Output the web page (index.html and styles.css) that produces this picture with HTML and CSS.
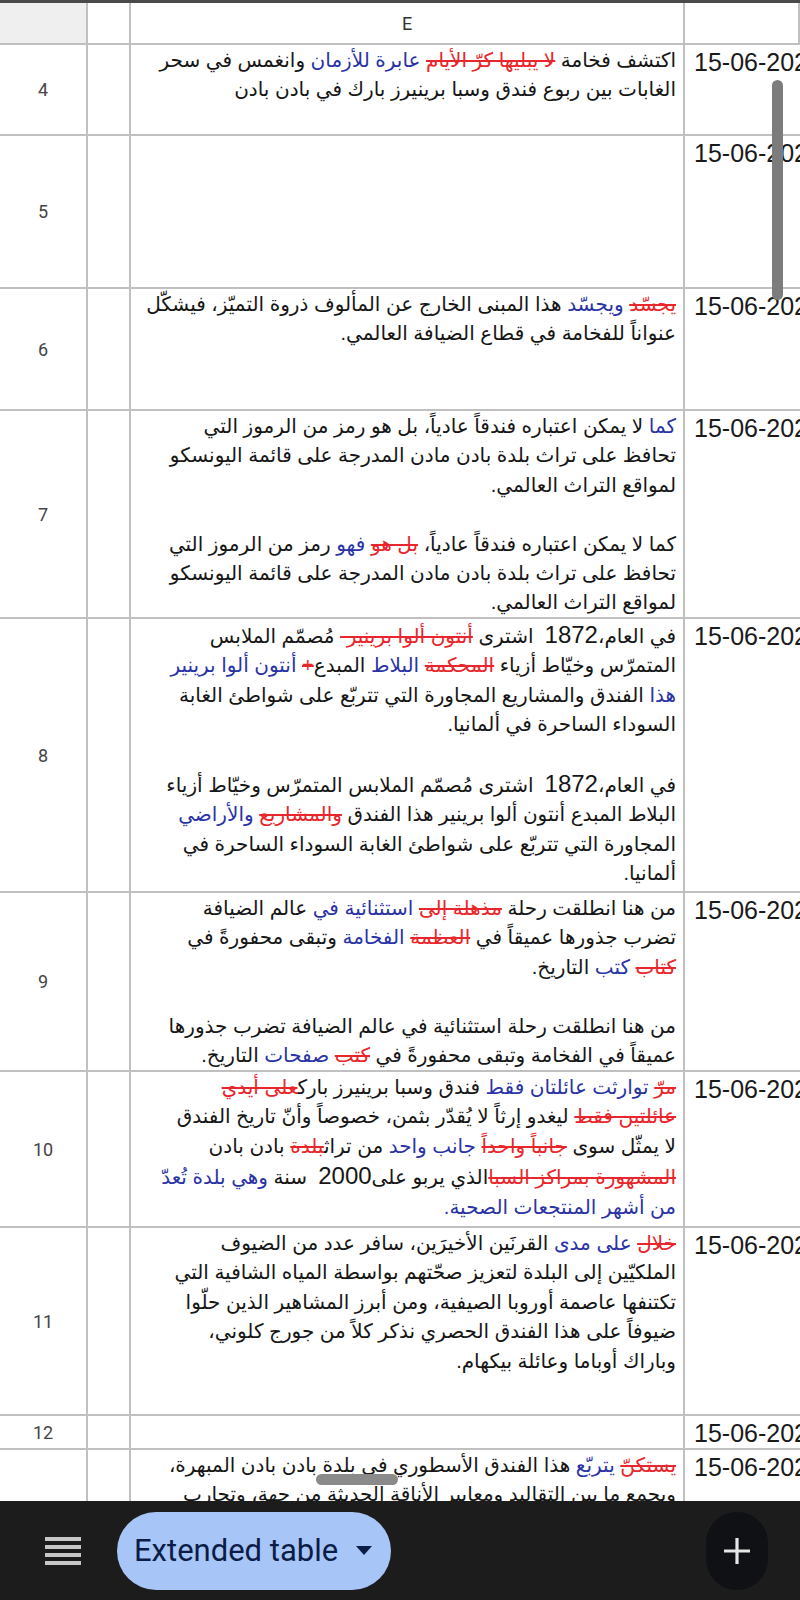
FILE: index.html
```html
<!DOCTYPE html>
<html lang="ar">
<head>
<meta charset="utf-8">
<title>Extended table</title>
<link rel="stylesheet" href="styles.css">
</head>
<body>
<div class="page">
  <div class="sheet">
    <div class="topline"></div>
    <div class="grid">
      <div class="cell corner"></div>
      <div class="cell hdr"></div>
      <div class="cell hdr colname">E</div>
      <div class="cell hdr"></div>

      <div class="cell num">4</div>
      <div class="cell narrow"></div>
      <div class="cell txt"><span class="ln">اكتشف فخامة <del>لا يبليها كرّ الأيام</del> <ins>عابرة للأزمان</ins> وانغمس في سحر</span><br><span class="ln">الغابات بين ربوع فندق وسبا برينيرز بارك في بادن بادن</span></div>
      <div class="cell date">15-06-2025</div>

      <div class="cell num">5</div>
      <div class="cell narrow"></div>
      <div class="cell txt"></div>
      <div class="cell date">15-06-2025</div>

      <div class="cell num">6</div>
      <div class="cell narrow"></div>
      <div class="cell txt"><span class="ln"><del>يجسّد</del> <ins>ويجسّد</ins> هذا المبنى الخارج عن المألوف ذروة التميّز، فيشكّل</span><br><span class="ln">عنواناً للفخامة في قطاع الضيافة العالمي.</span></div>
      <div class="cell date">15-06-2025</div>

      <div class="cell num">7</div>
      <div class="cell narrow"></div>
      <div class="cell txt"><span class="ln"><ins>كما</ins> لا يمكن اعتباره فندقاً عادياً، بل هو رمز من الرموز التي</span><br><span class="ln">تحافظ على تراث بلدة بادن مادن المدرجة على قائمة اليونسكو</span><br><span class="ln">لمواقع التراث العالمي.</span><br><br><span class="ln">كما لا يمكن اعتباره فندقاً عادياً، <del>بل هو</del> <ins>فهو</ins> رمز من الرموز التي</span><br><span class="ln">تحافظ على تراث بلدة بادن مادن المدرجة على قائمة اليونسكو</span><br><span class="ln">لمواقع التراث العالمي.</span></div>
      <div class="cell date">15-06-2025</div>

      <div class="cell num">8</div>
      <div class="cell narrow"></div>
      <div class="cell txt"><span class="ln">في العام،<span class="lat">1872</span>&nbsp; اشترى <del>أنتون ألوا برينير-</del> مُصمّم الملابس</span><br><span class="ln">المتمرّس وخيّاط أزياء <del>المحكمة</del> <ins>البلاط</ins> المبدع<del>+</del> <ins>أنتون ألوا برينير</ins></span><br><span class="ln"><ins>هذا</ins> الفندق والمشاريع المجاورة التي تتربّع على شواطئ الغابة</span><br><span class="ln">السوداء الساحرة في ألمانيا.</span><br><br><span class="ln">في العام،<span class="lat">1872</span>&nbsp; اشترى مُصمّم الملابس المتمرّس وخيّاط أزياء</span><br><span class="ln">البلاط المبدع أنتون ألوا برينير هذا الفندق <del>والمشاريع</del> <ins>والأراضي</ins></span><br><span class="ln">المجاورة التي تتربّع على شواطئ الغابة السوداء الساحرة في</span><br><span class="ln">ألمانيا.</span></div>
      <div class="cell date">15-06-2025</div>

      <div class="cell num">9</div>
      <div class="cell narrow"></div>
      <div class="cell txt"><span class="ln">من هنا انطلقت رحلة <del>مذهلة إلى</del> <ins>استثنائية في</ins> عالم الضيافة</span><br><span class="ln">تضرب جذورها عميقاً في <del>العظمة</del> <ins>الفخامة</ins> وتبقى محفورةً في</span><br><span class="ln"><del>كتاب</del> <ins>كتب</ins> التاريخ.</span><br><br><span class="ln">من هنا انطلقت رحلة استثنائية في عالم الضيافة تضرب جذورها</span><br><span class="ln">عميقاً في الفخامة وتبقى محفورةً في <del>كتب</del> <ins>صفحات</ins> التاريخ.</span></div>
      <div class="cell date">15-06-2025</div>

      <div class="cell num">10</div>
      <div class="cell narrow"></div>
      <div class="cell txt"><span class="ln"><del>مرّ</del> <ins>توارثت عائلتان فقط</ins> فندق وسبا برينيرز بارك<del>على أيدي</del></span><br><span class="ln"><del>عائلتين فقط</del> ليغدو إرثاً لا يُقدّر بثمن، خصوصاً وأنّ تاريخ الفندق</span><br><span class="ln">لا يمثّل سوى <del>جانباً واحداً</del> <ins>جانب واحد</ins> من تراث<del>بلدة</del> بادن بادن</span><br><span class="ln"><del>المشهورة بمراكز السبا</del>الذي يربو على<span class="lat">2000</span>&nbsp; سنة <ins>وهي بلدة تُعدّ</ins></span><br><span class="ln"><ins>من أشهر المنتجعات الصحية.</ins></span></div>
      <div class="cell date">15-06-2025</div>

      <div class="cell num">11</div>
      <div class="cell narrow"></div>
      <div class="cell txt"><span class="ln"><del>خلال</del> <ins>على مدى</ins> القرنَين الأخيرَين، سافر عدد من الضيوف</span><br><span class="ln">الملكيّين إلى البلدة لتعزيز صحّتهم بواسطة المياه الشافية التي</span><br><span class="ln">تكتنفها عاصمة أوروبا الصيفية، ومن أبرز المشاهير الذين حلّوا</span><br><span class="ln">ضيوفاً على هذا الفندق الحصري نذكر كلاً من جورج كلوني،</span><br><span class="ln">وباراك أوباما وعائلة بيكهام.</span></div>
      <div class="cell date">15-06-2025</div>

      <div class="cell num">12</div>
      <div class="cell narrow"></div>
      <div class="cell txt"></div>
      <div class="cell date">15-06-2025</div>

      <div class="cell num"></div>
      <div class="cell narrow"></div>
      <div class="cell txt"><span class="ln"><del>يستكنّ</del> <ins>يتربّع</ins> هذا الفندق الأسطوري في بلدة بادن بادن المبهرة،</span><br><span class="ln">ويجمع ما بين التقاليد ومعايير الأناقة الحديثة من جهة، وتجارب</span></div>
      <div class="cell date">15-06-2025</div>
    </div>
    <div class="vscroll"></div>
    <div class="hscroll"></div>
  </div>
  <div class="bottombar">
    <div class="menu-icon">
      <svg width="36" height="32" viewBox="0 0 36 32"><rect x="0" y="2" width="36" height="4" fill="#c7c7c7"/><rect x="0" y="10" width="36" height="4" fill="#c7c7c7"/><rect x="0" y="18" width="36" height="4" fill="#c7c7c7"/><rect x="0" y="26" width="36" height="4" fill="#c7c7c7"/></svg>
    </div>
    <div class="pill">
      <span class="pill-label">Extended table</span>
      <svg class="caret" width="16" height="9" viewBox="0 0 16 9"><path d="M0 0 L16 0 L8 9 Z" fill="#0b1d47"/></svg>
    </div>
    <div class="spacer"></div>
    <div class="fab">
      <svg width="30" height="30" viewBox="0 0 30 30"><path d="M15 2 V28 M2 15 H28" stroke="#e6e6e6" stroke-width="3.2" fill="none"/></svg>
    </div>
  </div>
</div>
</body>
</html>
```

FILE: styles.css
```css
html, body {
  margin: 0;
  padding: 0;
  background: #ffffff;
}
.page {
  width: 800px;
  height: 1600px;
  overflow: hidden;
  display: flex;
  flex-direction: column;
}
.sheet {
  position: relative;
  height: 1501px;
  overflow: hidden;
  flex: none;
}
.topline {
  height: 3px;
  background: #4a4a4a;
}
.grid {
  display: grid;
  grid-template-columns: 88px 43px 554px 115px;
  grid-template-rows: 42px 91px 153px 122px 208px 274px 179px 156px 188px 34px 200px;
}
.cell {
  box-sizing: border-box;
  border-right: 2px solid #c0c0c0;
  border-bottom: 2px solid #c0c0c0;
  overflow: hidden;
  min-width: 0;
}
.corner {
  background: #efefef;
}
.hdr {
  background: #ffffff;
}
.colname {
  font-family: Roboto, "Liberation Sans", sans-serif;
  font-size: 18px;
  color: #333333;
  display: flex;
  align-items: center;
  justify-content: center;
}
.num {
  font-family: Roboto, "Liberation Sans", sans-serif;
  font-size: 18px;
  color: #444444;
  display: flex;
  align-items: center;
  justify-content: center;
}
.txt {
  direction: rtl;
  text-align: right;
  font-family: "Liberation Sans", "DejaVu Sans", sans-serif;
  font-size: 20px;
  line-height: 29.4px;
  color: #161616;
  padding: 1px 7px 0 4px;
}
.ln {
  white-space: nowrap;
}
.lat {
  font-size: 24px;
}
.txt del {
  color: #e8262b;
  text-decoration: line-through;
  text-decoration-color: #e8262b;
}
.txt ins {
  color: #2a33a6;
  text-decoration: none;
}
.date {
  font-family: "Liberation Sans", sans-serif;
  font-size: 25px;
  line-height: 30px;
  color: #1a1a1a;
  padding: 2px 0 0 9px;
  white-space: nowrap;
  border-right: none;
}
.vscroll {
  position: absolute;
  left: 772px;
  top: 80px;
  width: 11px;
  height: 220px;
  border-radius: 6px;
  background: #7c7c7c;
}
.hscroll {
  position: absolute;
  left: 316px;
  top: 1474px;
  width: 82px;
  height: 11px;
  border-radius: 6px;
  background: #8a8a8a;
}
.bottombar {
  flex: 1;
  background: #1c1c1c;
  display: flex;
  align-items: center;
  padding: 0 32px 0 45px;
}
.menu-icon {
  display: flex;
  align-items: center;
  margin-right: 36px;
}
.pill {
  height: 78px;
  width: 274px;
  box-sizing: border-box;
  border-radius: 39px;
  background: #a8c5f8;
  display: flex;
  align-items: center;
  padding: 0 12px 0 17px;
  gap: 18px;
}
.pill-label {
  font-family: Roboto, "Liberation Sans", sans-serif;
  font-size: 31px;
  color: #0b1d47;
  white-space: nowrap;
}
.spacer {
  flex: 1;
}
.fab {
  width: 62px;
  height: 78px;
  border-radius: 31px;
  background: #0f1114;
  display: flex;
  align-items: center;
  justify-content: center;
}
```
